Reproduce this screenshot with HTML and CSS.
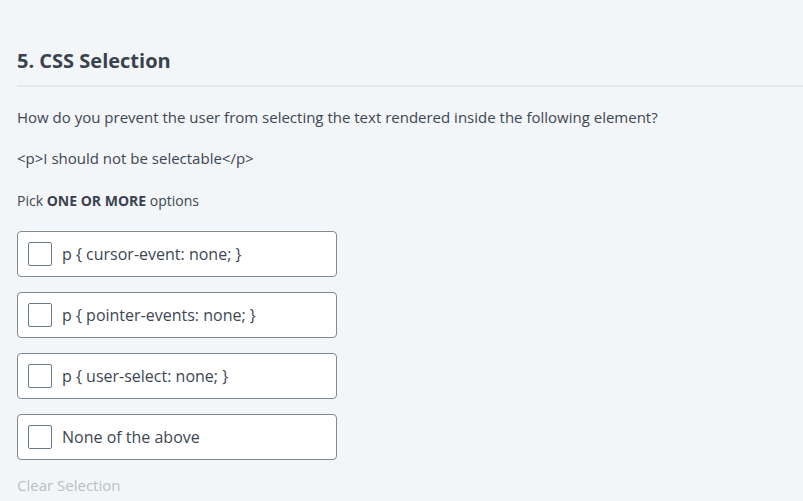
FILE: index.html
```html
<!DOCTYPE html>
<html lang="en">
<head>
<meta charset="utf-8">
<title>CSS Selection</title>
<link rel="stylesheet" href="styles.css">
</head>
<body>
<main class="question">
  <header class="q-header">
    <h2 class="q-title">5. CSS Selection</h2>
  </header>
  <p class="q-text">How do you prevent the user from selecting the text rendered inside the following element?</p>
  <p class="q-text">&lt;p&gt;I should not be selectable&lt;/p&gt;</p>
  <p class="q-hint">Pick <strong>ONE OR MORE</strong> options</p>
  <div class="options">
    <label class="option"><span class="check"></span><span class="opt-text">p { cursor-event: none; }</span></label>
    <label class="option"><span class="check"></span><span class="opt-text">p { pointer-events: none; }</span></label>
    <label class="option"><span class="check"></span><span class="opt-text">p { user-select: none; }</span></label>
    <label class="option"><span class="check"></span><span class="opt-text">None of the above</span></label>
  </div>
  <div class="clear">Clear Selection</div>
</main>
</body>
</html>
```
FILE: styles.css
```css
html, body {
  margin: 0;
  padding: 0;
  background: #f3f6f8;
}
body {
  font-family: "Open Sans", "Noto Sans", sans-serif;
  color: #39424e;
  width: 803px;
  height: 501px;
  overflow: hidden;
}
.question {
  padding: 47px 0 0 17px;
}
.q-header {
  border-bottom: 2px solid #e6e9ec;
  padding-bottom: 10px;
}
.q-title {
  margin: 0;
  font-size: 20px;
  line-height: 28px;
  font-weight: 700;
  color: #39424e;
}
.q-text {
  margin: 20px 0 0;
  font-size: 15px;
  line-height: 21px;
  color: #3d4651;
}
.q-hint {
  margin: 22px 0 0;
  font-size: 14px;
  line-height: 20px;
  color: #3d4651;
}
.q-hint strong {
  font-weight: 700;
  color: #39424e;
}
.options {
  margin-top: 20px;
  display: flex;
  flex-direction: column;
  gap: 15px;
  width: 320px;
}
.option {
  display: flex;
  align-items: center;
  gap: 10px;
  height: 44px;
  padding: 0 10px;
  background: #fff;
  border: 1px solid #7d8a94;
  border-radius: 4px;
}
.check {
  width: 22px;
  height: 22px;
  border: 1px solid #6f7b85;
  border-radius: 2px;
  background: #fff;
  flex: none;
}
.opt-text {
  font-size: 16px;
  color: #3d4651;
}
.clear {
  margin-top: 15px;
  font-size: 15px;
  line-height: 20px;
  color: #b8c0c6;
}
```
